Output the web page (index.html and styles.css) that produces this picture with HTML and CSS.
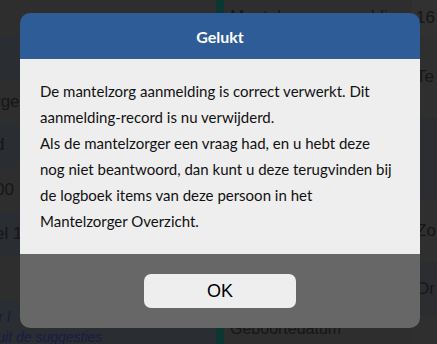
FILE: index.html
```html
<!DOCTYPE html>
<html lang="nl">
<head>
<meta charset="utf-8">
<title>Gelukt</title>
<link rel="stylesheet" href="styles.css">
</head>
<body>
<div class="page">
  <div class="col-left">
    <div class="row gray h36"></div>
    <div class="row blue h44"></div>
    <div class="row gray h43"><span class="cut">rger</span></div>
    <div class="row blue h44"><span class="cut">d</span></div>
    <div class="row gray h45"><span class="cut">00</span></div>
    <div class="row blue h44"><span class="cut">el 1</span></div>
    <div class="row gray h44"></div>
    <div class="row blue hint-row">
      <span class="hint first">Kies een mantelzorger l</span>
      <span class="hint last">Kies een naam uit de suggesties</span>
    </div>
  </div>
  <div class="bar"></div>
  <div class="col-mid">
    <div class="mid-top">Mantelzorg aanmelding</div>
    <div class="mid-fill"></div>
    <div class="mid-bottom">Geboortedatum</div>
  </div>
  <div class="col-right">
    <div class="rrow g1 r36">16</div>
    <div class="rrow g2 r82">Te</div>
    <div class="rrow b1 r82"></div>
    <div class="rrow g2 r62">Zo</div>
    <div class="rrow b1 r54">Or</div>
    <div class="rrow g2 rrest"></div>
  </div>
</div>

<div class="overlay">
  <div class="modal">
    <div class="modal-head">Gelukt</div>
    <div class="modal-body">
      De mantelzorg aanmelding is correct verwerkt. Dit<br>
      aanmelding-record is nu verwijderd.<br>
      Als de mantelzorger een vraag had, en u hebt deze<br>
      nog niet beantwoord, dan kunt u deze terugvinden bij<br>
      de logboek items van deze persoon in het<br>
      Mantelzorger Overzicht.
    </div>
    <div class="modal-foot">
      <button class="ok" type="button">OK</button>
    </div>
  </div>
</div>
</body>
</html>
```

FILE: styles.css
```css
* { box-sizing: border-box; }
html, body {
  margin: 0;
  padding: 0;
  width: 437px;
  height: 344px;
  overflow: hidden;
  background: #2e2e2e;
  font-family: "Liberation Sans", Arial, sans-serif;
  color: #111;
}
.page {
  display: grid;
  grid-template-columns: 216px 8px 188px 25px;
  height: 344px;
}
.col-left { display: flex; flex-direction: column; overflow: hidden; }
.row { display: flex; align-items: center; font-size: 17px; white-space: nowrap; }
.gray { background: #2e2e2e; }
.blue { background: #2a2d32; }
.h36 { height: 36px; }
.h43 { height: 43px; }
.h44 { height: 44px; }
.h45 { height: 45px; }
.cut { margin-left: -5px; color: #161616; }
.hint-row {
  flex: 1;
  flex-direction: column;
  align-items: flex-start;
  justify-content: flex-end;
  margin-bottom: -3px;
}
.hint {
  font-style: italic;
  font-size: 14px;
  color: #191b44;
  line-height: 20px;
}
.hint.first { margin-left: -137px; }
.hint.last { margin-left: -100px; }
.bar { background: #0c3632; }
.col-mid { display: flex; flex-direction: column; background: #2e2e2e; overflow: hidden; }
.mid-top { padding: 7px 0 0 6px; height: 36px; font-size: 17px; color: #161616; white-space: nowrap; }
.mid-fill { flex: 1; }
.mid-bottom { padding-left: 6px; height: 24px; font-size: 16px; color: #161616; line-height: 18px; }
.col-right { display: flex; flex-direction: column; overflow: hidden; }
.rrow { padding-left: 4px; font-size: 17px; color: #161616; display: flex; align-items: center; white-space: nowrap; }
.g1 { background: #313131; }
.g2 { background: #2f2f2f; }
.b1 { background: #2b2d31; }
.r36 { height: 36px; }
.r82 { height: 82px; }
.r62 { height: 62px; }
.r54 { height: 54px; }
.rrest { flex: 1; }

.overlay {
  position: fixed;
  inset: 0;
}
.modal {
  position: absolute;
  left: 20px;
  top: 13px;
  width: 400px;
  border-radius: 10px;
  overflow: hidden;
  font-family: Lato, "Open Sans", sans-serif;
}
.modal-head {
  height: 46px;
  background: #2e5c96;
  color: #fff;
  font-weight: 700;
  font-size: 16px;
  display: flex;
  align-items: center;
  justify-content: center;
}
.modal-body {
  background: #eeeeee;
  padding: 19px 20px 20px;
  font-size: 15px;
  line-height: 26px;
  color: #111;
  white-space: nowrap;
}
.modal-foot {
  background: #676767;
  padding: 20px 0;
  display: flex;
  justify-content: center;
}
.ok {
  width: 152px;
  height: 34px;
  border: 0;
  border-radius: 7px;
  background: #eeeeee;
  color: #000;
  font-family: "Liberation Sans", Arial, sans-serif;
  font-size: 18px;
  padding: 0;
}
```
